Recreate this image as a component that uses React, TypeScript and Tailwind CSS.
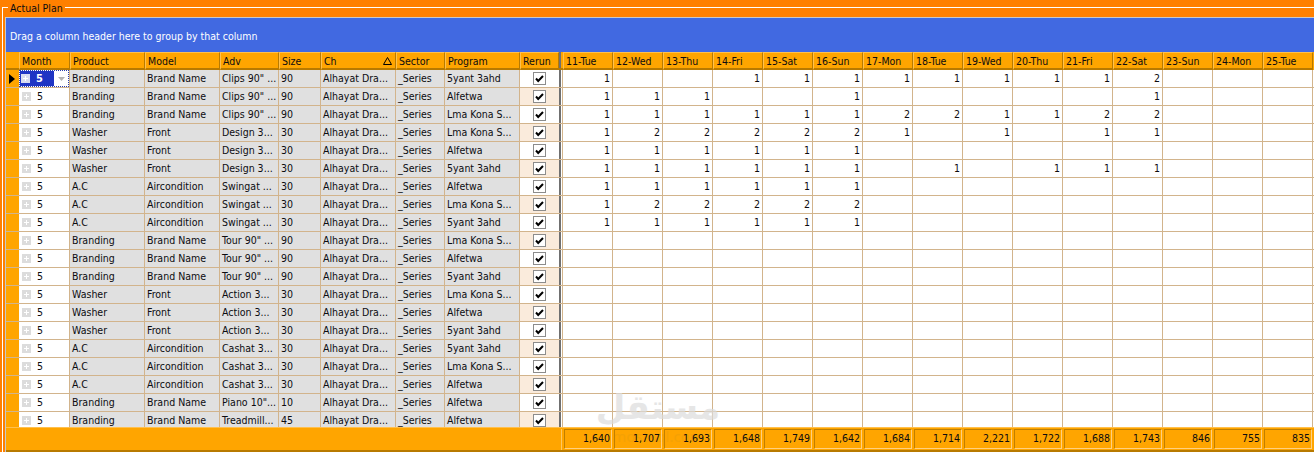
const GRID =
  "grid grid-cols-[13px_51px_75px_75px_59px_42px_75px_49px_75px_39px_4px_repeat(15,50px)_1px]";

const days = [
  "11-Tue", "12-Wed", "13-Thu", "14-Fri", "15-Sat", "16-Sun", "17-Mon", "18-Tue",
  "19-Wed", "20-Thu", "21-Fri", "22-Sat", "23-Sun", "24-Mon", "25-Tue",
];
const totals = [
  "1,640", "1,707", "1,693", "1,648", "1,749", "1,642", "1,684", "1,714",
  "2,221", "1,722", "1,688", "1,743", "846", "755", "835",
];
const heads = ["Month", "Product", "Model", "Adv", "Size", "Ch", "Sector", "Program", "Rerun"];

type Row = [string, string, string, string, string, (number | null)[]];
const _ = null;
const rows: Row[] = [
  ["Branding", "Brand Name", 'Clips 90" ...', "90", "5yant 3ahd", [1, _, _, 1, 1, 1, 1, 1, 1, 1, 1, 2]],
  ["Branding", "Brand Name", 'Clips 90" ...', "90", "Alfetwa", [1, 1, 1, _, _, 1, _, _, _, _, _, 1]],
  ["Branding", "Brand Name", 'Clips 90" ...', "90", "Lma Kona S...", [1, 1, 1, 1, 1, 1, 2, 2, 1, 1, 2, 2]],
  ["Washer", "Front", "Design 3...", "30", "Lma Kona S...", [1, 2, 2, 2, 2, 2, 1, _, 1, _, 1, 1]],
  ["Washer", "Front", "Design 3...", "30", "Alfetwa", [1, 1, 1, 1, 1, 1]],
  ["Washer", "Front", "Design 3...", "30", "5yant 3ahd", [1, 1, 1, 1, 1, 1, _, 1, _, 1, 1, 1]],
  ["A.C", "Aircondition", "Swingat ...", "30", "Alfetwa", [1, 1, 1, 1, 1, 1]],
  ["A.C", "Aircondition", "Swingat ...", "30", "Lma Kona S...", [1, 2, 2, 2, 2, 2]],
  ["A.C", "Aircondition", "Swingat ...", "30", "5yant 3ahd", [1, 1, 1, 1, 1, 1]],
  ["Branding", "Brand Name", 'Tour 90" ...', "90", "Lma Kona S...", []],
  ["Branding", "Brand Name", 'Tour 90" ...', "90", "Alfetwa", []],
  ["Branding", "Brand Name", 'Tour 90" ...', "90", "5yant 3ahd", []],
  ["Washer", "Front", "Action 3...", "30", "Lma Kona S...", []],
  ["Washer", "Front", "Action 3...", "30", "Alfetwa", []],
  ["Washer", "Front", "Action 3...", "30", "5yant 3ahd", []],
  ["A.C", "Aircondition", "Cashat 3...", "30", "5yant 3ahd", []],
  ["A.C", "Aircondition", "Cashat 3...", "30", "Lma Kona S...", []],
  ["A.C", "Aircondition", "Cashat 3...", "30", "Alfetwa", []],
  ["Branding", "Brand Name", 'Piano 10"...', "10", "Alfetwa", []],
  ["Branding", "Brand Name", "Treadmill...", "45", "Alfetwa", []],
];

function Head({ label, sort }: { label: string; sort?: boolean }) {
  return (
    <div className="flex h-[18px] items-center justify-between overflow-hidden border-t border-l border-t-[#ffc04d] border-l-[#ffc04d] border-r border-b-2 border-r-[#b87a00] border-b-[#b87a00] pt-[1px] pr-[3px] pl-[2px] whitespace-nowrap">
      <span>{label}</span>
      {sort && (
        <svg width="9" height="8" viewBox="0 0 9 8">
          <path d="M4.5 .5 L8.5 7.5 H.5 Z" fill="none" stroke="#000" />
        </svg>
      )}
    </div>
  );
}

function Cell({ text }: { text: string }) {
  return (
    <div className="flex h-[18px] items-center overflow-hidden border-r border-b border-[#d2b48c] bg-[#e0e0e0] pb-[1px] pl-[2px] whitespace-nowrap">
      {text}
    </div>
  );
}

function Check({ alt }: { alt: boolean }) {
  return (
    <div className={`flex h-[18px] items-center justify-center border-b border-[#d2b48c] ${alt ? "bg-[#faebdc]" : "bg-white"}`}>
      <svg width="13" height="13" viewBox="0 0 13 13">
        <rect x=".5" y=".5" width="12" height="12" fill="#fff" stroke="#8c8c8c" />
        <path d="M3 6.5 L5.2 9 L10 4" fill="none" stroke="#000" strokeWidth="2" />
      </svg>
    </div>
  );
}

function Plus({ light }: { light?: boolean }) {
  return (
    <svg width="9" height="9" viewBox="0 0 9 9" className="shrink-0">
      <rect width="9" height="9" fill={light ? "#d8dcf0" : "#dcdcdc"} />
      <path d="M4.5 2 V7 M2 4.5 H7" stroke="#fff" />
    </svg>
  );
}

function MonthCell({ active }: { active: boolean }) {
  if (active) {
    return (
      <div className="flex h-[18px] items-center border-r border-b border-[#d2b48c] bg-white">
        <div className="flex h-[17px] w-full items-center border border-dotted border-[#2a3fb0] bg-white">
          <div className="flex h-full w-[34px] items-center gap-[6px] bg-[#1f35c4] pb-[1px] pl-[1px] text-[11px] font-bold text-white">
            <Plus light />
            <span>5</span>
          </div>
          <div className="flex flex-1 items-center justify-center">
            <svg width="7" height="4" viewBox="0 0 7 4">
              <path d="M0 0 H7 L3.5 4 Z" fill="#b4b4b4" />
            </svg>
          </div>
        </div>
      </div>
    );
  }
  return (
    <div className="flex h-[18px] items-center gap-[6px] border-r border-b border-[#d2b48c] bg-white pl-[3px]">
      <Plus />
      <span className="pb-[1px]">5</span>
    </div>
  );
}

export default function App() {
  return (
    <div className="h-[452px] w-[1314px] overflow-hidden bg-[#ff8000] pl-[2px] font-['DejaVu_Sans_Condensed','Noto_Sans',sans-serif] text-[10.5px] leading-[15px] text-[#0c0c10]">
      <fieldset className="h-[452px] min-w-0 border-t border-l border-white pt-[2px] pl-[2px]">
        <legend className="ml-[3px] h-[15px] px-[2px] pt-[1px] leading-[14px]">Actual Plan</legend>
        <div className="relative flex h-[435px] flex-col overflow-hidden border-t border-l border-[#c8c8c8]">
          <div className="flex h-[34px] shrink-0 items-center bg-[#4169e1] pt-[2px] pl-[4px] text-white">
            Drag a column header here to group by that column
          </div>

          <div className={`${GRID} shrink-0 bg-[#ffa500]`}>
            <div className="h-[18px] border-b-2 border-[#b87a00]" />
            {heads.map((h) => (
              <Head key={h} label={h} sort={h === "Ch"} />
            ))}
            <div className="h-[18px] border-b-2 border-[#b87a00] bg-[linear-gradient(to_right,#707070_2px,#ffa500_2px)]" />
            {days.map((d) => (
              <Head key={d} label={d} />
            ))}
            <div />
          </div>

          <div className="min-h-0 flex-1 overflow-hidden">
            {rows.map((r, i) => (
              <div key={i} className={GRID}>
                <div className="flex h-[18px] items-center border-b border-[#d2b48c] bg-[#ffa500] pl-[3px]">
                  {i === 0 && (
                    <svg width="6" height="10" viewBox="0 0 6 10">
                      <path d="M0 0 L6 5 L0 10 Z" fill="#000" />
                    </svg>
                  )}
                </div>
                <MonthCell active={i === 0} />
                <Cell text={r[0]} />
                <Cell text={r[1]} />
                <Cell text={r[2]} />
                <Cell text={r[3]} />
                <Cell text="Alhayat Dra..." />
                <Cell text="_Series" />
                <Cell text={r[4]} />
                <Check alt={i % 2 === 1} />
                <div className="h-[18px] border-b border-[#d2b48c] bg-[linear-gradient(to_right,#707070_2px,#ffffff_2px,#ffffff_3px,#d2b48c_3px)]" />
                {days.map((d, k) => (
                  <div
                    key={d}
                    className="flex h-[18px] items-center justify-end border-r border-b border-[#d2b48c] bg-white pr-[2px] pb-[1px]"
                  >
                    {r[5][k] ?? ""}
                  </div>
                ))}
                <div className="border-b border-[#d2b48c] bg-white" />
              </div>
            ))}
          </div>

          <div className={`${GRID} h-[25px] shrink-0 border-t border-b-2 border-t-[#ffc04d] border-b-[#b87a00] bg-[#ffa500] pt-[1px]`}>
            <div className="col-span-10" />
            <div className="bg-[linear-gradient(to_right,#ffa500_2px,#ffc860_2px,#ffc860_3px,#ffa500_3px)]" />
            {totals.map((t) => (
              <div
                key={t}
                className="relative z-10 mx-[1px] flex h-[20px] items-center justify-end border border-t-[#c07f00] border-r-[#ffd080] border-b-[#ffd080] border-l-[#c07f00] pr-[1px] pb-[1px]"
              >
                {t}
              </div>
            ))}
            <div />
          </div>

          <div className="pointer-events-none absolute top-[368px] left-[587px] flex w-[130px] flex-col items-center leading-none opacity-70">
            <span className="font-['DejaVu_Sans',sans-serif] text-[34px] leading-[42px] font-bold text-[#dcdcdc]">مستقل</span>
            <span className="font-['Noto_Sans',sans-serif] text-[15px] leading-[16px] text-[#f0a008]">mostaql.com</span>
          </div>
        </div>
      </fieldset>
    </div>
  );
}
